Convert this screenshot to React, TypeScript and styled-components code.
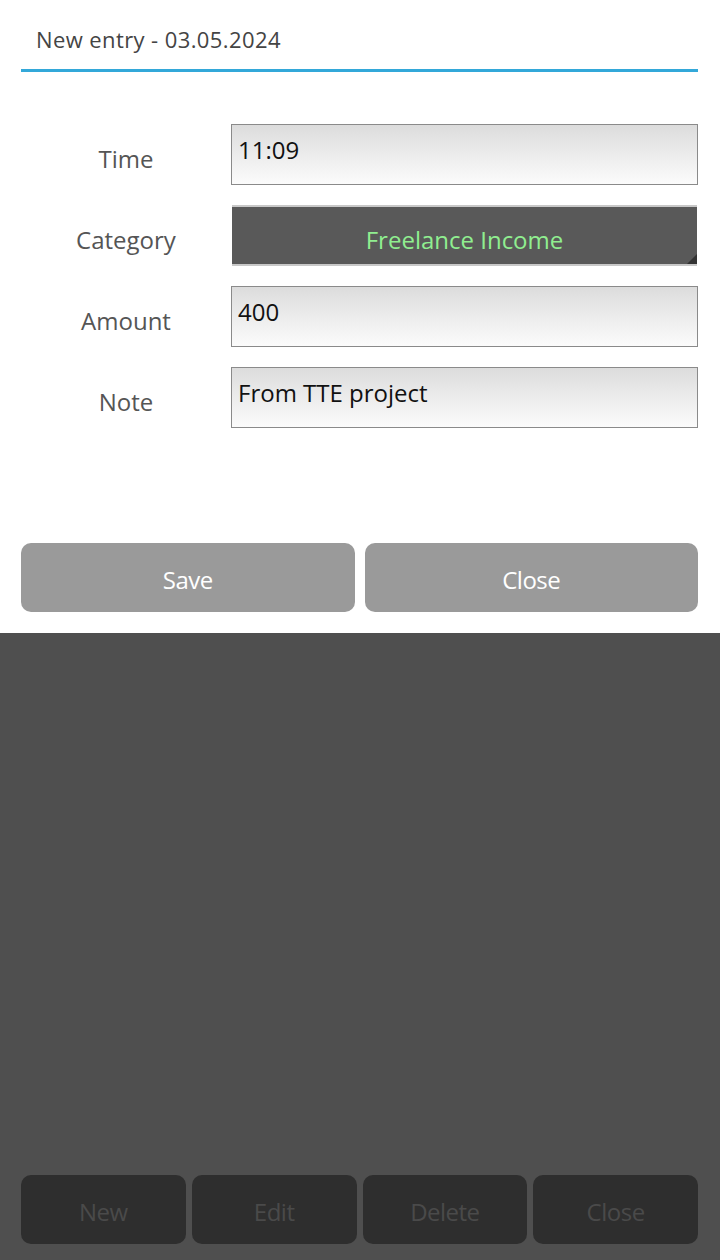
import React from "react";
import styled, { createGlobalStyle } from "styled-components";

const GlobalStyle = createGlobalStyle`
  html, body { margin: 0; padding: 0; }
  body {
    background: #4f4f4f;
    font-family: "Open Sans", "Noto Sans", sans-serif;
  }
  #root { min-height: 1260px; display: flex; flex-direction: column; }
`;

const Page = styled.div`
  display: flex;
  flex-direction: column;
  width: 720px;
  height: 1260px;
`;

const Dialog = styled.div`
  background: #ffffff;
  height: 633px;
  box-sizing: border-box;
  padding: 0 22px 0 21px;
  display: flex;
  flex-direction: column;
`;

const Title = styled.div`
  height: 72px;
  box-sizing: border-box;
  padding: 24px 0 0 15px;
  font-size: 22px;
  line-height: 30px;
  letter-spacing: 0.4px;
  color: #444;
  border-bottom: 3px solid #33a8d9;
`;

const Form = styled.div`
  display: flex;
  flex-direction: column;
  gap: 20px;
  margin-top: 52px;
`;

const Row = styled.div`
  display: grid;
  grid-template-columns: 210px 1fr;
  height: 61px;
`;

const Label = styled.div`
  display: flex;
  align-items: center;
  justify-content: center;
  padding-top: 7px;
  font-size: 24px;
  color: #555;
`;

const Input = styled.div`
  box-sizing: border-box;
  border: 1px solid #8a8a8a;
  background: linear-gradient(to bottom, #dcdcdc 0%, #ececec 50%, #fbfbfb 100%);
  font-size: 24px;
  line-height: 30px;
  color: #111;
  padding: 10px 0 0 6px;
`;

const Select = styled.div`
  position: relative;
  box-sizing: border-box;
  margin-left: 1px;
  margin-right: 1px;
  background: #595959;
  border-top: 2px solid #c8c8c8;
  border-bottom: 2px solid #c8c8c8;
  color: #90ee90;
  font-size: 24px;
  display: flex;
  align-items: center;
  justify-content: center;
  padding-top: 8px;
`;

const Corner = styled.div`
  position: absolute;
  right: 0;
  bottom: 0;
  width: 0;
  height: 0;
  border-left: 10px solid transparent;
  border-bottom: 10px solid #333;
`;

const ButtonBar = styled.div`
  display: grid;
  grid-template-columns: 1fr 1fr;
  gap: 10px;
  margin-top: 115px;
`;

const Button = styled.div<{ $dark?: boolean }>`
  height: 69px;
  border-radius: 10px;
  background: ${(p) => (p.$dark ? "#2e2e2e" : "#9a9a9a")};
  color: ${(p) => (p.$dark ? "#4a4a4a" : "#ffffff")};
  font-size: 24px;
  display: flex;
  align-items: center;
  justify-content: center;
  padding-top: 4px;
  box-sizing: border-box;
  letter-spacing: -0.5px;
`;

const Backdrop = styled.div`
  flex: 1;
  background: #4f4f4f;
  display: flex;
  flex-direction: column;
  justify-content: flex-end;
  padding: 0 22px 16px 21px;
`;

const BottomBar = styled.div`
  display: grid;
  grid-template-columns: repeat(4, 1fr);
  gap: 6px;
`;

export default function App() {
  return (
    <Page>
      <GlobalStyle />
      <Dialog>
        <Title>New entry - 03.05.2024</Title>
        <Form>
          <Row>
            <Label>Time</Label>
            <Input>11:09</Input>
          </Row>
          <Row>
            <Label>Category</Label>
            <Select>
              Freelance Income
              <Corner />
            </Select>
          </Row>
          <Row>
            <Label>Amount</Label>
            <Input>400</Input>
          </Row>
          <Row>
            <Label>Note</Label>
            <Input>From TTE project</Input>
          </Row>
        </Form>
        <ButtonBar>
          <Button>Save</Button>
          <Button>Close</Button>
        </ButtonBar>
      </Dialog>
      <Backdrop>
        <BottomBar>
          <Button $dark>New</Button>
          <Button $dark>Edit</Button>
          <Button $dark>Delete</Button>
          <Button $dark>Close</Button>
        </BottomBar>
      </Backdrop>
    </Page>
  );
}
